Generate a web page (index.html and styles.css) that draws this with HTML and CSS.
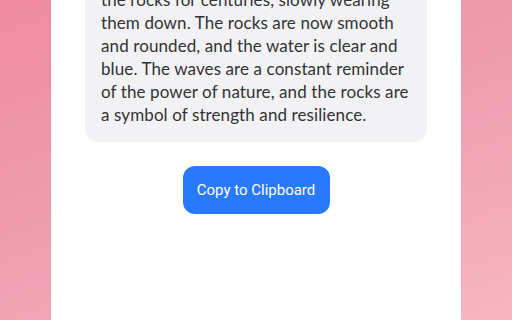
FILE: index.html
```html
<!DOCTYPE html>
<html>
<head>
<meta charset="utf-8">
<link rel="stylesheet" href="styles.css">
</head>
<body>
<div class="page">
  <main class="column">
    <section class="card">
      <p class="story">the rocks for centuries, slowly wearing them down. The rocks are now smooth and rounded, and the water is clear and blue. The waves are a constant reminder of the power of nature, and the rocks are a symbol of strength and resilience.</p>
    </section>
    <button class="copy-btn">Copy to Clipboard</button>
  </main>
</div>
</body>
</html>
```
FILE: styles.css
```css
html, body {
  margin: 0;
  padding: 0;
  height: 100%;
  overflow: hidden;
}
.page {
  height: 320px;
  background: linear-gradient(160deg, #ee8aa2 0%, #f09fb1 55%, #f5b6c1 100%);
  display: flex;
  justify-content: center;
}
.column {
  width: 410px;
  background: #ffffff;
  display: flex;
  flex-direction: column;
  align-items: center;
  padding: 0 34px;
  box-sizing: border-box;
}
.card {
  align-self: stretch;
  margin-top: -28px;
  background: #f2f2f4;
  border-radius: 14px;
  padding: 16px;
}
.story {
  margin: 0;
  font-family: Lato, "Open Sans", sans-serif;
  font-size: 17px;
  line-height: 23px;
  letter-spacing: 0.1px;
  color: #333336;
}
.copy-btn {
  margin-top: 24px;
  height: 48px;
  width: 147px;
  border: none;
  border-radius: 12px;
  background: #2979fb;
  color: #ffffff;
  font-family: Roboto, "Liberation Sans", sans-serif;
  font-size: 15px;
  cursor: pointer;
}
```
